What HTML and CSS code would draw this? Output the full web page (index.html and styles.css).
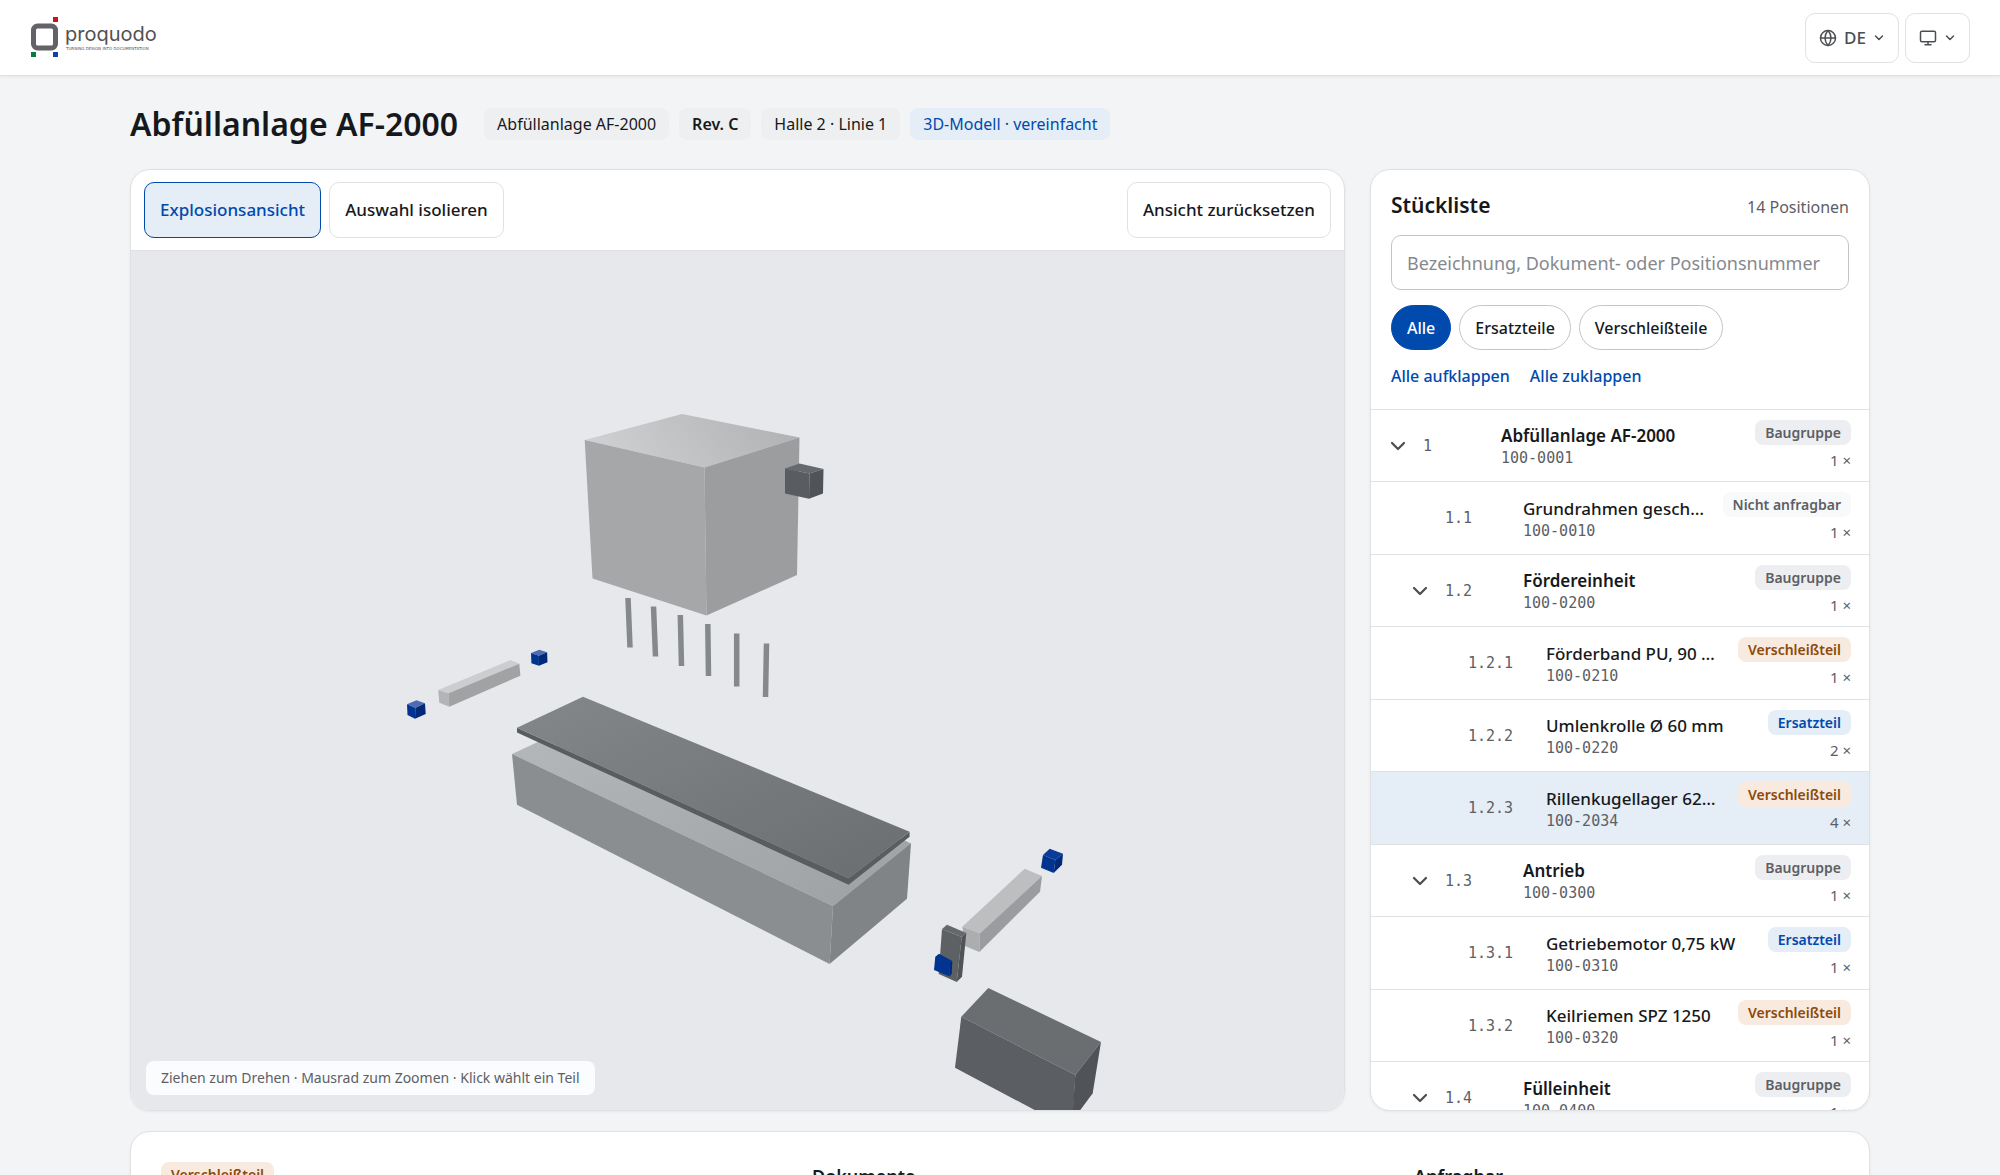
FILE: index.html
```html
<!DOCTYPE html>
<html lang="de">
<head>
<meta charset="utf-8">
<meta name="viewport" content="width=device-width, initial-scale=1">
<title>Abfüllanlage AF-2000</title>
<link rel="stylesheet" href="styles.css">
</head>
<body>
<header class="topbar">
  <a class="logo" href="#" aria-label="proquodo">
    <svg width="130" height="44" viewBox="0 0 130 44" aria-hidden="true">
      <rect x="2.500" y="10" width="22" height="22" rx="4" fill="none" stroke="#626366" stroke-width="5"/>
      <rect x="22" y="1" width="5" height="5" fill="#c4161c"/>
      <rect x="0" y="36" width="5" height="5" fill="#0a7a3e"/>
      <rect x="22" y="36" width="5" height="5" fill="#1143a6"/>
      <text class="logo-word" x="34" y="25">proquodo</text>
      <text class="logo-claim" x="35" y="34">TURNING DESIGN INTO DOCUMENTATION</text>
    </svg>
  </a>
  <div class="topbar-actions">
    <button class="menu-button" type="button">
      <svg class="icon" width="18" height="18" viewBox="0 0 24 24" aria-hidden="true"><circle cx="12" cy="12" r="10"/><path d="M2 12h20M12 2a15 15 0 0 1 4 10 15 15 0 0 1-4 10 15 15 0 0 1-4-10 15 15 0 0 1 4-10z"/></svg>
      <span>DE</span>
      <svg class="icon caret" width="12" height="12" viewBox="0 0 24 24" aria-hidden="true"><path d="m5 8 7 7 7-7"/></svg>
    </button>
    <button class="menu-button" type="button" aria-label="Darstellung">
      <svg class="icon" width="18" height="18" viewBox="0 0 24 24" aria-hidden="true"><rect x="2" y="3" width="20" height="14" rx="2"/><path d="M8 21h8M12 17v4"/></svg>
      <svg class="icon caret" width="12" height="12" viewBox="0 0 24 24" aria-hidden="true"><path d="m5 8 7 7 7-7"/></svg>
    </button>
  </div>
</header>

<main class="page">
  <div class="page-head">
    <h1>Abfüllanlage AF-2000</h1>
    <ul class="chips">
      <li class="chip">Abfüllanlage AF-2000</li>
      <li class="chip chip-strong">Rev. C</li>
      <li class="chip">Halle 2 · Linie 1</li>
      <li class="chip chip-info">3D-Modell · vereinfacht</li>
    </ul>
  </div>

  <div class="workspace">
    <section class="card viewer" aria-label="3D-Modell">
      <div class="toolbar">
        <button class="tool tool-active" type="button" aria-pressed="true">Explosionsansicht</button>
        <button class="tool" type="button" aria-pressed="false">Auswahl isolieren</button>
        <button class="tool tool-end" type="button">Ansicht zurücksetzen</button>
      </div>
      <div class="stage">
        <svg class="scene" viewBox="131 251 1213 859" preserveAspectRatio="xMidYMid slice" aria-hidden="true">
          <defs>
            <linearGradient id="tank-top" x1="0" y1="0.6" x2="1" y2="0.4"><stop offset="0" stop-color="#d0d1d2"/><stop offset="1" stop-color="#b0b2b4"/></linearGradient>
            <linearGradient id="belt-top" x1="0" y1="0" x2="1" y2="1"><stop offset="0" stop-color="#84878a"/><stop offset="1" stop-color="#6b6e71"/></linearGradient>
            <linearGradient id="frame-top" x1="0" y1="0" x2="1" y2="1"><stop offset="0" stop-color="#b3b7ba"/><stop offset="1" stop-color="#9ea1a4"/></linearGradient>
          </defs>
          <!-- Behälter -->
          <path fill="url(#tank-top)" d="M584.7 440 682 414l117.5 23.5-95 30z"/>
          <path fill="#a5a7a9" d="M584.7 440l119.8 27.5 2 148-114-37z"/>
          <path fill="#9b9d9f" d="M704.5 467.5l95-30L797 575l-90.500 40.500z"/>
          <!-- Steuerung -->
          <path fill="#666a6e" d="M785 468.500l14.500-5 24 5.500-14 4.500z"/>
          <path fill="#595d62" d="M785 468.500l24.500 5-.5 25.200-24-5.200z"/>
          <path fill="#505459" d="M809.500 473.500l14-4.500-.5 24.500-14 5.200z"/>
          <!-- Füllventile -->
          <g stroke="#85898b" stroke-width="5.500">
            <path d="M628 598l2 49.500M653.500 606.500l2 50M680.300 615l1.200 51M707.800 624l.7 52M736.700 633.500v53M766.500 643.500l-1 53.500"/>
          </g>
          <!-- Rahmen -->
          <path fill="url(#frame-top)" d="M512 754l28-13 365 99.500 6 3-78 62.500z"/>
          <path fill="#8a8e91" d="M512 754l321 152-3.400 58L517 804.700z"/>
          <path fill="#808487" d="M833 906l78-62.700-4 55.400L829.600 964z"/>
          <!-- Förderband -->
          <path fill="#595d60" d="M517 727.700l331.600 150.600 61-46.600v5l-61 48L517 732.500z"/>
          <path fill="url(#belt-top)" d="M517 727.700l66-31 326.600 135-61 46.600z"/>
          <!-- Welle links -->
          <path fill="#cccdce" d="M438.200 690l72.200-30 9 3.700-70.800 29.600z"/>
          <path fill="#b3b4b6" d="M438.200 690l10.400 3.300.7 13.400-10-4z"/>
          <path fill="#a1a2a4" d="M448.600 693.300l70.700-29.600 1.100 12-71.100 31z"/>
          <!-- Lager links -->
          <path fill="#4e6bb5" d="M531 653l8.300-3.300 7.800 2.600-8.200 3.400zM407 704.300l9.400-4 8.600 3-9.600 4.700z"/>
          <path fill="#003490" d="M531 653l7.900 2.700v10l-7.500-2.400zM407 704.300l8.400 3.700-.4 10.700-7.500-3.700z"/>
          <path fill="#002a78" d="M538.900 655.700l8.200-3.400.4 10-8.600 3.400zM415.400 708l9.600-4.700.7 10.700-10.700 4.700z"/>
          <!-- Welle rechts -->
          <path fill="#bdbec0" d="M962.300 926.700l62.400-58L1042 876l-62 57.300z"/>
          <path fill="#acadaf" d="M962.300 926.700l17.700 6.600-.7 18.700-14.300-6z"/>
          <path fill="#9b9c9f" d="M980 933.300L1042 876l-2 15.700-60.700 60.300z"/>
          <!-- Lager rechts -->
          <path fill="#0a3c98" d="M1043 855l6.700-6.300 13.300 5-7.700 6.300z"/>
          <path fill="#003490" d="M1043 855l12.300 5-1.600 13-12.700-5.300z"/>
          <path fill="#002a78" d="M1055.300 860l7.700-6.300-1 11-8.300 8.300z"/>
          <!-- Riemen -->
          <path fill="#66696c" d="M942 929l5-4.300 19.300 8.300-4.600 4z"/>
          <path fill="#5d6164" d="M942 929l19.700 8-5 45-18-8z"/>
          <path fill="#505458" d="M961.700 937l4.600-4-4.300 43.700-5.300 5.300z"/>
          <path fill="#003490" d="M935.300 956.700l3.700-3 13.300 7.300-2.300 2-.5 13.500-15.500-6.500z"/>
          <path fill="#002a78" d="M950 963l2.300-2-.6 13-2.200 2.500z"/>
          <!-- Motor -->
          <path fill="#6a6e70" d="M961.300 1016.700l27-28.700 112.700 54-25.700 33z"/>
          <path fill="#5b5f63" d="M961.300 1016.700l114 58.300-3 55-117.300-62.300z"/>
          <path fill="#505458" d="M1075.300 1075l25.700-33-8.300 51.300-20.700 28z"/>
        </svg>
        <p class="hint">Ziehen zum Drehen · Mausrad zum Zoomen · Klick wählt ein Teil</p>
      </div>
    </section>

    <aside class="card parts">
      <div class="parts-head">
        <div class="parts-title">
          <h2>Stückliste</h2>
          <span class="count">14 Positionen</span>
        </div>
        <input class="search" type="text" aria-label="Stückliste durchsuchen" placeholder="Bezeichnung, Dokument- oder Positionsnummer">
        <div class="filters">
          <button class="pill pill-active" type="button" aria-pressed="true">Alle</button>
          <button class="pill" type="button" aria-pressed="false">Ersatzteile</button>
          <button class="pill" type="button" aria-pressed="false">Verschleißteile</button>
        </div>
        <div class="tree-actions">
          <button class="text-button" type="button">Alle aufklappen</button>
          <button class="text-button" type="button">Alle zuklappen</button>
        </div>
      </div>
      <ul class="tree">
        <li class="row group">
          <button class="toggle" type="button" aria-label="Zuklappen"><svg class="icon" width="18" height="18" viewBox="0 0 24 24" aria-hidden="true"><path d="m4 8 8 8 8-8"/></svg></button>
          <span class="pos">1</span>
          <span class="part"><span class="name">Abfüllanlage AF-2000</span><span class="code">100-0001</span></span>
          <span class="meta"><span class="badge">Baugruppe</span><span class="qty">1 ×</span></span>
        </li>
        <li class="row level-1">
          <span class="pos">1.1</span>
          <span class="part"><span class="name">Grundrahmen geschweißt</span><span class="code">100-0010</span></span>
          <span class="meta"><span class="badge badge-muted">Nicht anfragbar</span><span class="qty">1 ×</span></span>
        </li>
        <li class="row group level-1">
          <button class="toggle" type="button" aria-label="Zuklappen"><svg class="icon" width="18" height="18" viewBox="0 0 24 24" aria-hidden="true"><path d="m4 8 8 8 8-8"/></svg></button>
          <span class="pos">1.2</span>
          <span class="part"><span class="name">Fördereinheit</span><span class="code">100-0200</span></span>
          <span class="meta"><span class="badge">Baugruppe</span><span class="qty">1 ×</span></span>
        </li>
        <li class="row level-2">
          <span class="pos">1.2.1</span>
          <span class="part"><span class="name">Förderband PU, 90 mm</span><span class="code">100-0210</span></span>
          <span class="meta"><span class="badge badge-wear">Verschleißteil</span><span class="qty">1 ×</span></span>
        </li>
        <li class="row level-2">
          <span class="pos">1.2.2</span>
          <span class="part"><span class="name">Umlenkrolle Ø 60 mm</span><span class="code">100-0220</span></span>
          <span class="meta"><span class="badge badge-spare">Ersatzteil</span><span class="qty">2 ×</span></span>
        </li>
        <li class="row level-2 selected">
          <span class="pos">1.2.3</span>
          <span class="part"><span class="name">Rillenkugellager 6204-2RS</span><span class="code">100-2034</span></span>
          <span class="meta"><span class="badge badge-wear">Verschleißteil</span><span class="qty">4 ×</span></span>
        </li>
        <li class="row group level-1">
          <button class="toggle" type="button" aria-label="Zuklappen"><svg class="icon" width="18" height="18" viewBox="0 0 24 24" aria-hidden="true"><path d="m4 8 8 8 8-8"/></svg></button>
          <span class="pos">1.3</span>
          <span class="part"><span class="name">Antrieb</span><span class="code">100-0300</span></span>
          <span class="meta"><span class="badge">Baugruppe</span><span class="qty">1 ×</span></span>
        </li>
        <li class="row level-2">
          <span class="pos">1.3.1</span>
          <span class="part"><span class="name">Getriebemotor 0,75 kW</span><span class="code">100-0310</span></span>
          <span class="meta"><span class="badge badge-spare">Ersatzteil</span><span class="qty">1 ×</span></span>
        </li>
        <li class="row level-2">
          <span class="pos">1.3.2</span>
          <span class="part"><span class="name">Keilriemen SPZ 1250</span><span class="code">100-0320</span></span>
          <span class="meta"><span class="badge badge-wear">Verschleißteil</span><span class="qty">1 ×</span></span>
        </li>
        <li class="row group level-1">
          <button class="toggle" type="button" aria-label="Zuklappen"><svg class="icon" width="18" height="18" viewBox="0 0 24 24" aria-hidden="true"><path d="m4 8 8 8 8-8"/></svg></button>
          <span class="pos">1.4</span>
          <span class="part"><span class="name">Fülleinheit</span><span class="code">100-0400</span></span>
          <span class="meta"><span class="badge">Baugruppe</span><span class="qty">1 ×</span></span>
        </li>
      </ul>
    </aside>
  </div>

  <section class="card detail">
    <div><span class="badge badge-wear">Verschleißteil</span></div>
    <h3>Dokumente</h3>
    <h3>Anfragbar</h3>
  </section>
</main>
</body>
</html>
```
FILE: styles.css
```css
:root {
  --bg: #f3f4f6;
  --line: #dfe1e4;
  --line-strong: #c2c5c8;
  --text: #16191c;
  --muted: #5c6065;
  --blue: #004aad;
  --blue-soft: #e5edf6;
}

* { box-sizing: border-box; }

body {
  margin: 0;
  height: 100vh;
  overflow: hidden;
  background: var(--bg);
  color: var(--text);
  font: 400 17px/24px "Noto Sans", sans-serif;
}

h1, h2, h3, p, ul { margin: 0; padding: 0; }
ul { list-style: none; }
button, input { font: inherit; color: inherit; }
button { cursor: pointer; }

.icon {
  flex: none;
  fill: none;
  stroke: currentColor;
  stroke-width: 2;
  stroke-linecap: round;
  stroke-linejoin: round;
}

.card {
  background: #fff;
  border: 1px solid var(--line);
  border-radius: 20px;
  box-shadow: 0 1px 3px rgba(20, 30, 40, 0.06);
  overflow: hidden;
}

/* Kopfzeile */
.topbar {
  display: flex;
  align-items: center;
  justify-content: space-between;
  height: 76px;
  padding: 0 30px;
  background: #fff;
  border-bottom: 1px solid var(--line);
  box-shadow: 0 1px 3px rgba(20, 30, 40, 0.06);
}
.logo { display: flex; padding-left: 1px; }
.logo-word { font: 400 20px Inter, sans-serif; fill: #505154; }
.logo-claim { font: 400 4px "DejaVu Sans", sans-serif; fill: #505154; }
.topbar-actions { display: flex; gap: 6px; }
.menu-button {
  display: flex;
  align-items: center;
  gap: 7px;
  height: 50px;
  padding: 0 13px;
  background: #fff;
  border: 1px solid var(--line);
  border-radius: 10px;
  color: #4b4f54;
  font-size: 17px;
  font-weight: 500;
}
.menu-button .caret { stroke-width: 3; }

/* Seite */
.page {
  max-width: 1820px;
  margin: 0 auto;
  padding: 28px 40px;
}
.page-head {
  display: flex;
  align-items: center;
  gap: 26px;
  height: 40px;
  margin-bottom: 25px;
}
h1 { font-size: 32px; line-height: 40px; font-weight: 600; }
.chips { display: flex; gap: 10px; }
.chip {
  padding: 4px 13px;
  border-radius: 8px;
  background: #eeeff1;
  font-size: 16px;
}
.chip-strong { font-weight: 600; }
.chip-info { background: var(--blue-soft); color: var(--blue); }

.workspace {
  display: grid;
  grid-template-columns: minmax(0, 1fr) 500px;
  gap: 25px;
  height: calc(80vh + 2px);
}

/* Modellansicht */
.viewer { display: flex; flex-direction: column; }
.toolbar {
  display: flex;
  gap: 8px;
  padding: 12px 13px;
  border-bottom: 1px solid var(--line);
}
.tool {
  height: 56px;
  padding: 0 15px;
  background: #fff;
  border: 1px solid var(--line);
  border-radius: 10px;
  font-size: 17px;
  font-weight: 500;
}
.tool-active {
  background: var(--blue-soft);
  border-color: var(--blue);
  color: var(--blue);
}
.tool-end { margin-left: auto; }
.stage {
  position: relative;
  flex: 1;
  min-height: 0;
  background: #e6e8ec;
}
.scene { display: block; width: 100%; height: 100%; }
.hint {
  position: absolute;
  left: 15px;
  bottom: 15px;
  padding: 5px 15px;
  border-radius: 8px;
  background: #fbfcfd;
  color: var(--muted);
  font-size: 14px;
}

/* Stückliste */
.parts { display: flex; flex-direction: column; }
.parts-head {
  display: flex;
  flex: none;
  flex-direction: column;
  gap: 15px;
  padding: 20px 20px 22px;
}
.parts-title { display: flex; align-items: baseline; justify-content: space-between; }
h2 { font-size: 21px; line-height: 30px; font-weight: 600; }
.count { color: var(--muted); font-size: 16px; }
.search {
  width: 100%;
  height: 55px;
  padding: 0 15px;
  background: #fff;
  border: 1px solid var(--line-strong);
  border-radius: 10px;
  font-size: 18px;
}
.search::placeholder { color: #85898e; opacity: 1; }
.filters { display: flex; gap: 8px; }
.pill {
  height: 45px;
  padding: 0 15px;
  background: #fff;
  border: 1px solid var(--line-strong);
  border-radius: 23px;
  font-size: 16px;
  font-weight: 500;
}
.pill-active { background: var(--blue); border-color: var(--blue); color: #fff; }
.tree-actions { display: flex; gap: 20px; }
.text-button {
  padding: 0;
  background: none;
  border: 0;
  color: var(--blue);
  font-size: 16px;
  font-weight: 500;
  line-height: 22px;
}

.row {
  display: grid;
  grid-template-columns: 24px 68px minmax(0, 1fr) auto;
  column-gap: 10px;
  align-items: center;
  height: 72px;
  padding: 0 18px;
  border-top: 1px solid var(--line);
}
.row:nth-child(even) { height: 73px; }
.level-1 { padding-left: 40px; }
.level-2 { padding-left: 63px; }
.selected { background: var(--blue-soft); }
.toggle {
  display: flex;
  padding: 0;
  background: none;
  border: 0;
  color: #4b4f54;
}
.toggle .icon { stroke-width: 3; }
.pos { grid-column: 2; }
.pos, .code {
  color: var(--muted);
  font: 400 15px/20px "DejaVu Sans Mono", monospace;
}
.part { display: flex; flex-direction: column; min-width: 0; }
.name {
  overflow: hidden;
  font-size: 17px;
  font-weight: 500;
  line-height: 25px;
  text-overflow: ellipsis;
  white-space: nowrap;
}
.group .name { font-weight: 600; }
.meta { display: flex; flex-direction: column; align-items: flex-end; gap: 3px; padding-left: 5px; }
.badge {
  display: inline-block;
  padding: 0 10px;
  border-radius: 8px;
  background: #edeef1;
  color: var(--muted);
  font-size: 14px;
  font-weight: 600;
  line-height: 25px;
}
.badge-muted { background: #f8f9fa; }
.badge-wear { background: #f8eadf; color: #8c4a0b; }
.badge-spare { background: var(--blue-soft); color: var(--blue); }
.qty { color: var(--muted); font-size: 15px; line-height: 24px; }

/* Detailbereich */
.detail {
  display: grid;
  grid-template-columns: 626px 577px 1fr;
  gap: 25px;
  margin-top: 20px;
  padding: 30px;
  height: 360px;
}
h3 { font-size: 18px; line-height: 28px; font-weight: 600; }
```
